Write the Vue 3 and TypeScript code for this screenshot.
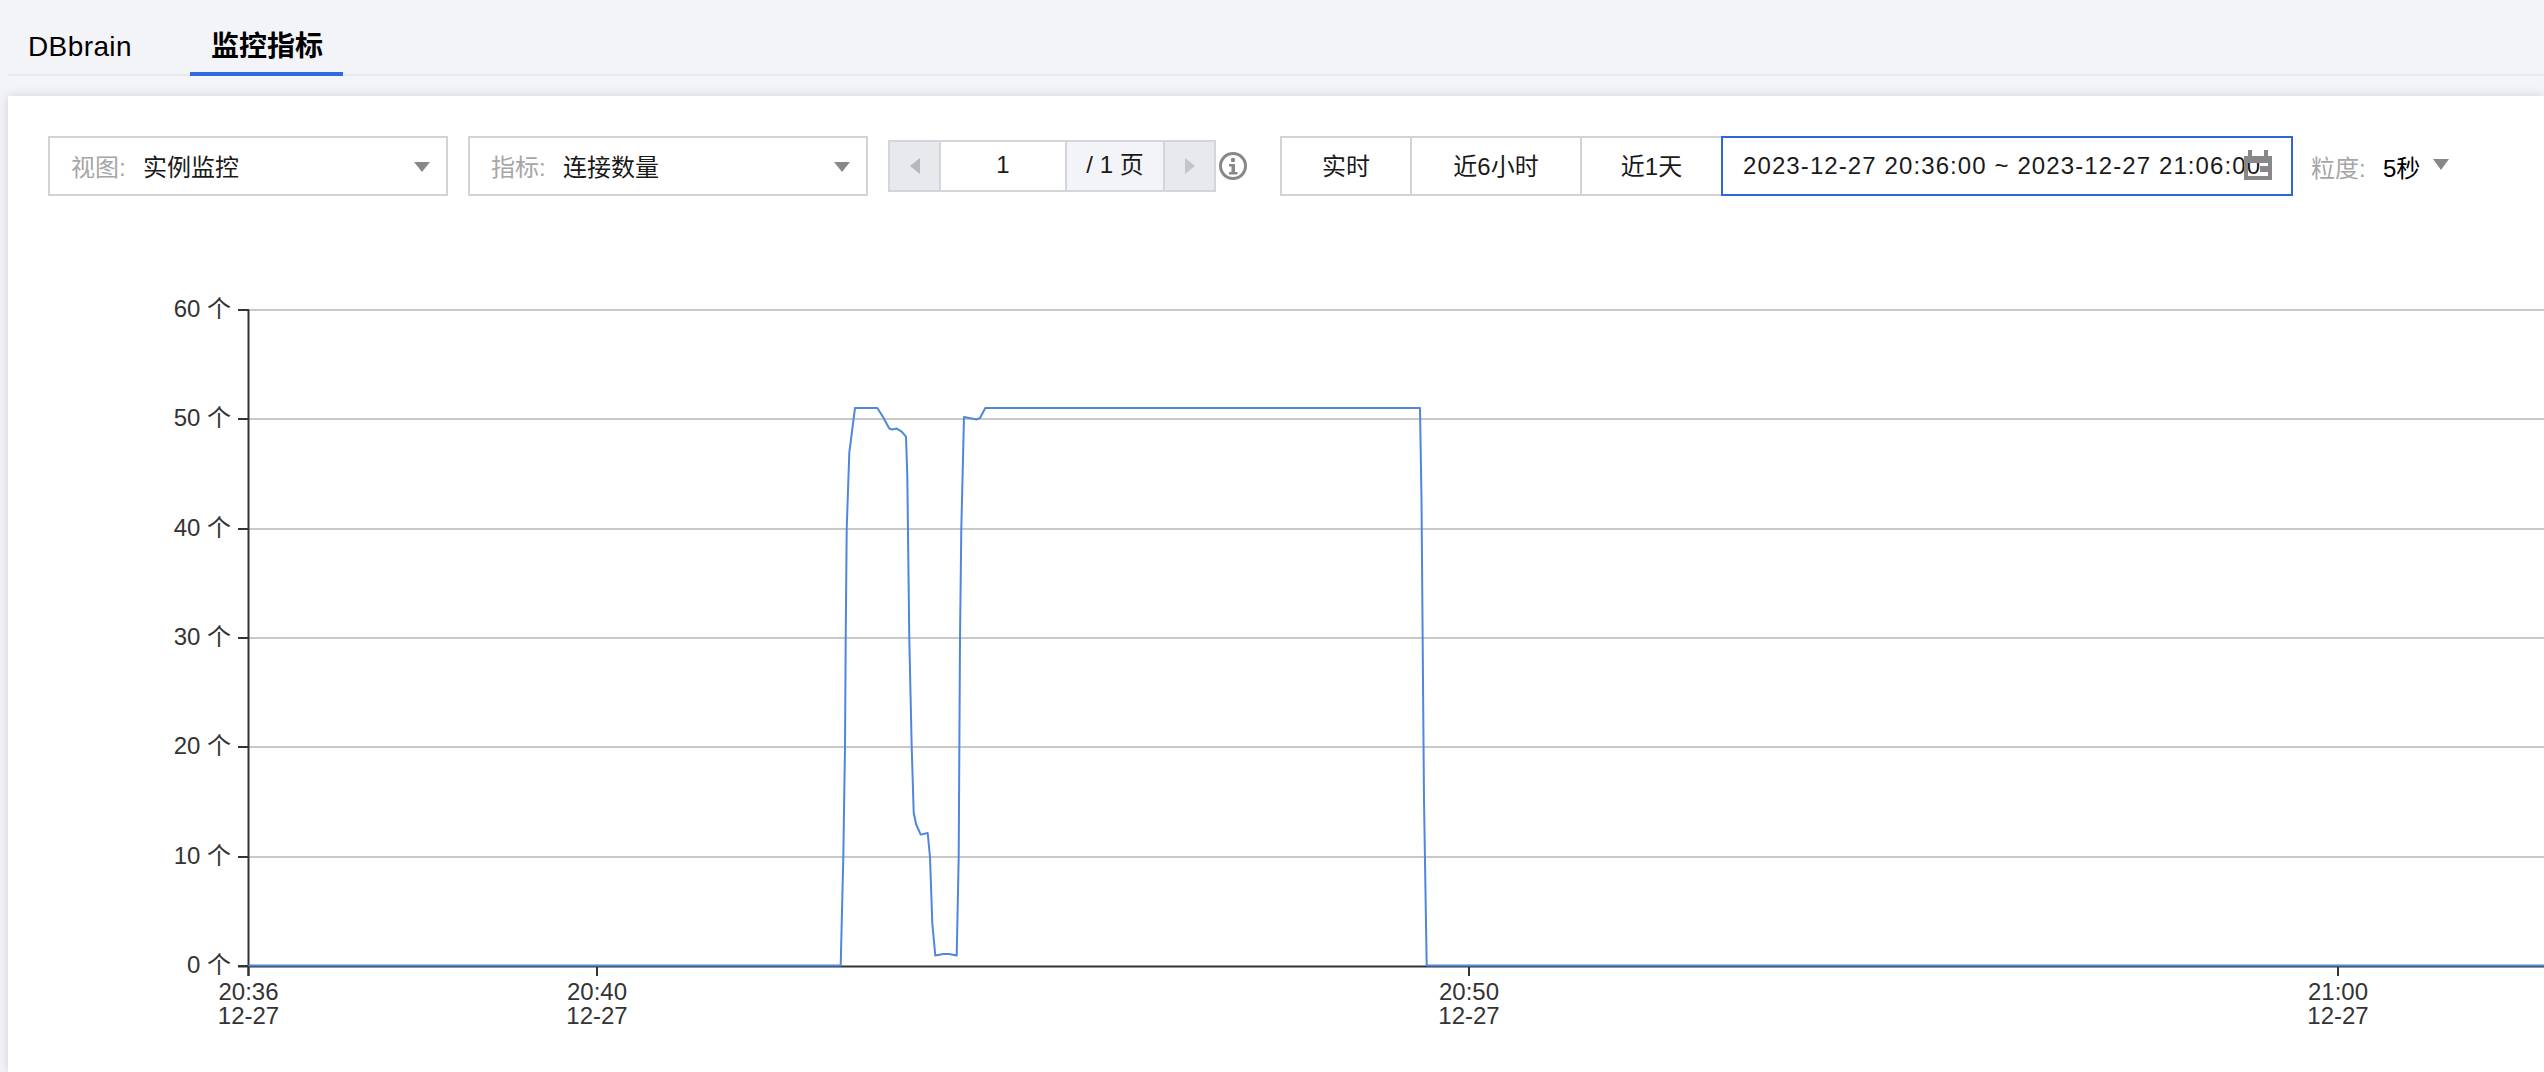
<script setup lang="ts">
const grid: { v: number; y: number }[] = [
  { v: 60, y: 310 },
  { v: 50, y: 419 },
  { v: 40, y: 529 },
  { v: 30, y: 638 },
  { v: 20, y: 747 },
  { v: 10, y: 857 },
  { v: 0, y: 966 },
]
const gridLines = grid.slice(0, 6)

const xTicks = [
  { x: 248.5, time: '20:36' },
  { x: 597, time: '20:40' },
  { x: 1469, time: '20:50' },
  { x: 2338, time: '21:00' },
]

const curve: [number, number][] = [
  [248.5, 965.5], [840.7, 965.5], [843.3, 857], [845, 747], [845.7, 638.7], [846.7, 529],
  [849.3, 452.7], [855, 408], [877.3, 408], [882.7, 416.4], [889.3, 428.6], [892, 429.5],
  [896.7, 428.6], [901.7, 431.7], [906, 436.6], [907.3, 475.7], [909.3, 638.7], [911.7, 747],
  [913.7, 812.5], [916, 824], [920.7, 834.6], [927.7, 833], [930, 857], [932.3, 923.4],
  [935.3, 955.6], [943.3, 954], [949, 954], [956.7, 955.6], [958.7, 857], [960, 638.7],
  [961.3, 529], [964, 417], [976.7, 419.4], [980, 418], [985.3, 408], [1420, 408],
  [1421.5, 500], [1424, 800], [1426.7, 965.5], [2544, 965.5],
]
const points = curve.map((p) => p.join(',')).join(' ')
</script>

<template>
  <div class="page">
    <nav class="tabs">
      <div class="tab">DBbrain</div>
      <div class="tab active">监控指标</div>
    </nav>
    <main class="card">
      <div class="toolbar">
        <div class="select">
          <span class="label">视图:</span><span class="value">实例监控</span><i class="caret"></i>
        </div>
        <div class="select">
          <span class="label">指标:</span><span class="value">连接数量</span><i class="caret"></i>
        </div>
        <div class="pager">
          <div class="page-btn"><i class="arrow-left"></i></div>
          <div class="page-input">1</div>
          <div class="page-total">/ 1 页</div>
          <div class="page-btn"><i class="arrow-right"></i></div>
        </div>
        <svg class="info" width="28" height="28" viewBox="0 0 28 28">
          <circle cx="14" cy="14" r="12.5" fill="none" stroke="#888" stroke-width="3" />
          <circle cx="14" cy="8" r="2.2" fill="#888" />
          <path d="M10 12h6v8h2.5v2.5h-8.5V20h2.5v-5.5H10z" fill="#888" />
        </svg>
        <div class="segments">
          <div class="segment s1">实时</div>
          <div class="segment s2">近6小时</div>
          <div class="segment s3">近1天</div>
          <div class="date">
            <span class="date-text">2023-12-27 20:36:00 ~ 2023-12-27 21:06:00</span>
            <svg class="calendar" width="28" height="30" viewBox="0 0 28 30">
              <path fill="#888" fill-rule="evenodd" d="M4 0h4v6h12V0h4v6h4v24H0V6h4zM4 13v13h20V13z" />
              <rect x="16" y="16" width="8" height="6" fill="#888" />
            </svg>
          </div>
        </div>
        <div class="grain">
          <span class="label">粒度:</span><span class="grain-value">5秒</span><i class="caret small"></i>
        </div>
      </div>

      <svg class="chart" width="2536" height="976" viewBox="8 96 2536 976">
        <g class="grid">
          <line v-for="g in gridLines" :key="g.v" x1="249" x2="2544" :y1="g.y" :y2="g.y" />
        </g>
        <g class="axis">
          <line x1="248.5" x2="248.5" y1="310" y2="976" />
          <line x1="238" x2="2544" y1="966.5" y2="966.5" />
          <line v-for="g in grid" :key="'t' + g.v" x1="238" x2="249" :y1="g.y" :y2="g.y" />
          <line v-for="t in xTicks" :key="t.time" :x1="t.x" :x2="t.x" y1="966" y2="976" />
        </g>
        <polyline class="series" :points="points" />
        <text v-for="g in grid" :key="'l' + g.v" class="tick-label" x="231" :y="g.y + 7" text-anchor="end">{{ g.v }} 个</text>
        <g v-for="t in xTicks" :key="'x' + t.time" class="tick-label" text-anchor="middle">
          <text :x="t.x" y="1000">{{ t.time }}</text>
          <text :x="t.x" y="1024">12-27</text>
        </g>
      </svg>
    </main>
  </div>
</template>

<style>
html, body { margin: 0; padding: 0; background: #f3f4f8; overflow: hidden; }
</style>

<style scoped>
.page {
  width: 2544px;
  height: 1072px;
  overflow: hidden;
  background: #f3f4f8;
  font-family: "Liberation Sans", "Noto Sans CJK SC", sans-serif;
  font-size: 24px;
  color: #1a1a1a;
}
.tabs {
  display: flex;
  gap: 38px;
  height: 74px;
  margin-left: 8px;
  border-bottom: 2px solid #e9eaef;
  box-sizing: content-box;
}
.tab {
  height: 76px;
  padding: 0 20px;
  box-sizing: border-box;
  font-size: 28px;
  line-height: 94px;
  letter-spacing: 0.4px;
  color: #000;
}
.tab.active {
  width: 153px;
  padding-left: 21px;
  letter-spacing: 0;
  font-weight: 700;
  border-bottom: 4px solid #2f6ae0;
}
.card {
  margin: 20px 0 0 8px;
  height: 976px;
  background: #fff;
  box-shadow: 0 0 10px rgba(54, 58, 80, 0.16);
  position: relative;
  box-sizing: border-box;
}
.toolbar {
  position: absolute;
  left: 40px;
  top: 40px;
  display: flex;
  align-items: center;
  height: 60px;
}
.select {
  width: 400px;
  height: 60px;
  margin-right: 20px;
  padding: 0 0 2px 21px;
  box-sizing: border-box;
  border: 2px solid #d2d3d8;
  display: flex;
  align-items: center;
  position: relative;
}
.label { color: #a6a6a6; width: 72px; flex: none; }
.value { color: #1a1a1a; }
.caret {
  position: absolute;
  right: 16px;
  top: 24px;
  width: 0;
  height: 0;
  border-left: 8px solid transparent;
  border-right: 8px solid transparent;
  border-top: 10px solid #888;
}
.pager {
  display: flex;
  width: 328px;
  height: 52px;
  box-sizing: border-box;
  border: 2px solid #d2d5da;
  background: #e7e9ed;
}
.page-btn {
  width: 49px;
  flex: none;
  display: flex;
  align-items: center;
  justify-content: center;
}
.arrow-left {
  width: 0; height: 0;
  border-top: 8px solid transparent;
  border-bottom: 8px solid transparent;
  border-right: 10px solid #b5b8bd;
}
.arrow-right {
  width: 0; height: 0;
  border-top: 8px solid transparent;
  border-bottom: 8px solid transparent;
  border-left: 10px solid #c2c5ca;
}
.page-input {
  width: 128px;
  flex: none;
  box-sizing: border-box;
  background: #fff;
  border-left: 2px solid #d2d5da;
  border-right: 2px solid #d2d5da;
  text-align: center;
  line-height: 46px;
}
.page-total {
  width: 98px;
  flex: none;
  box-sizing: border-box;
  background: #f2f4f8;
  border-right: 2px solid #d2d5da;
  text-align: center;
  line-height: 46px;
}
.info { margin-left: 3px; flex: none; }
.segments {
  display: flex;
  height: 60px;
  margin-left: 33px;
}
.segment {
  box-sizing: border-box;
  border: 2px solid #d2d3d8;
  border-right: 0;
  text-align: center;
  line-height: 58px;
}
.s1 { width: 130px; }
.s2 { width: 170px; }
.s3 { width: 141px; }
.date {
  width: 572px;
  box-sizing: border-box;
  border: 2px solid #2f66d8;
  padding-left: 20px;
  line-height: 55px;
  position: relative;
  white-space: nowrap;
  letter-spacing: 1.1px;
}
.calendar {
  position: absolute;
  left: 521px;
  top: 12px;
}
.grain {
  margin-left: 18px;
  display: flex;
  align-items: center;
  position: relative;
}
.grain-value { margin-right: 13px; color: #000; }
.caret.small {
  position: static;
  margin-top: -4px;
  border-top-width: 11px;
}
.chart {
  position: absolute;
  left: 0;
  top: 0;
  display: block;
}
.grid line { stroke: #c8c8c8; stroke-width: 2; }
.axis line { stroke: #333; stroke-width: 2; }
.series {
  fill: none;
  stroke: #4f86e0;
  stroke-width: 2;
  stroke-linejoin: round;
}
.tick-label {
  font-size: 24px;
  fill: #333;
  font-family: "Liberation Sans", "Noto Sans CJK SC", sans-serif;
}
</style>
